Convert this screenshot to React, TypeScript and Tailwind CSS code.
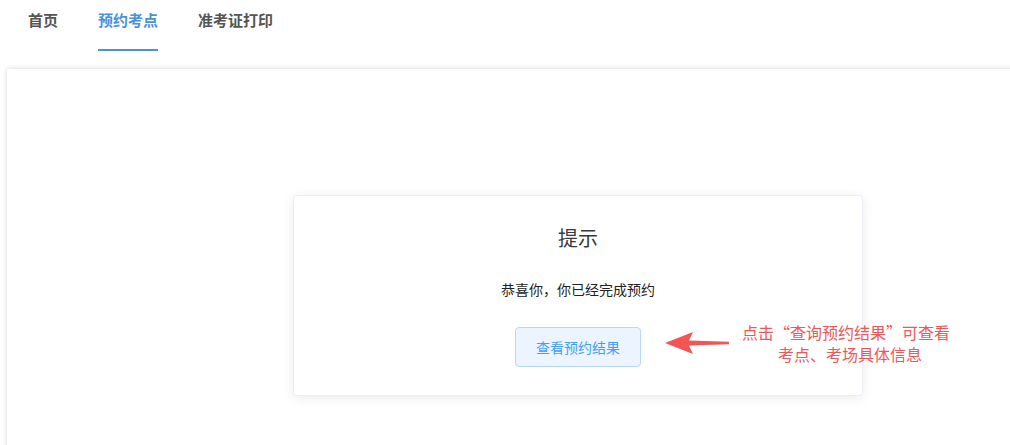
const font = {
  fontFamily: '"Microsoft YaHei", "Noto Sans CJK SC", "Liberation Sans", sans-serif',
};

const tabs = [
  { label: "首页", active: false },
  { label: "预约考点", active: true },
  { label: "准考证打印", active: false },
];

function Arrow() {
  return (
    <svg width="66" height="24" viewBox="0 0 66 24" className="block">
      <path d="M0 12 L28 1 L24 9.5 L64 10.8 L64 13.2 L24 14.5 L28 23 Z" fill="#f55454" />
    </svg>
  );
}

export default function App() {
  return (
    <div className="relative h-[445px] w-[1010px] overflow-hidden bg-white" style={font}>
      <nav className="flex h-[51px] gap-10 pl-[28px]">
        {tabs.map((t) => (
          <div
            key={t.label}
            className={
              "flex h-full items-start border-b-2 pt-[10px] text-[15px] font-bold leading-[20px] " +
              (t.active ? "border-[#4a90e2] text-[#4a90e2]" : "border-transparent text-[#555]")
            }
          >
            {t.label}
          </div>
        ))}
      </nav>

      <div className="ml-[7px] mt-[18px] h-[400px] w-[1100px] rounded-[2px] bg-white pl-[286px] pt-[126px] shadow-[0_0_5px_rgba(0,0,0,0.18)]">
        <div className="flex h-[201px] w-[570px] flex-col items-center rounded-[4px] border border-[#ebeef5] bg-white pt-[28px] shadow-[0_2px_12px_rgba(0,0,0,0.08)]">
          <div className="text-[20px] leading-[28px] text-[#3a3a3a]">提示</div>
          <div className="mt-[27px] text-[14px] leading-[20px] text-[#222]">恭喜你，你已经完成预约</div>
          <button className="mt-[28px] h-[40px] w-[126px] rounded-[4px] border border-[#b3d8ff] bg-[#ecf5ff] text-[14px] text-[#409eff]">
            查看预约结果
          </button>
        </div>
      </div>

      <div className="absolute left-[665px] top-[331px]">
        <Arrow />
      </div>
      <div className="absolute left-[740px] top-[321px] w-[212px] text-center text-[16px] leading-[22px] text-[#f55454]">
        <div>点击“查询预约结果”可查看</div>
        <div className="pl-[8px]">考点、考场具体信息</div>
      </div>
    </div>
  );
}
